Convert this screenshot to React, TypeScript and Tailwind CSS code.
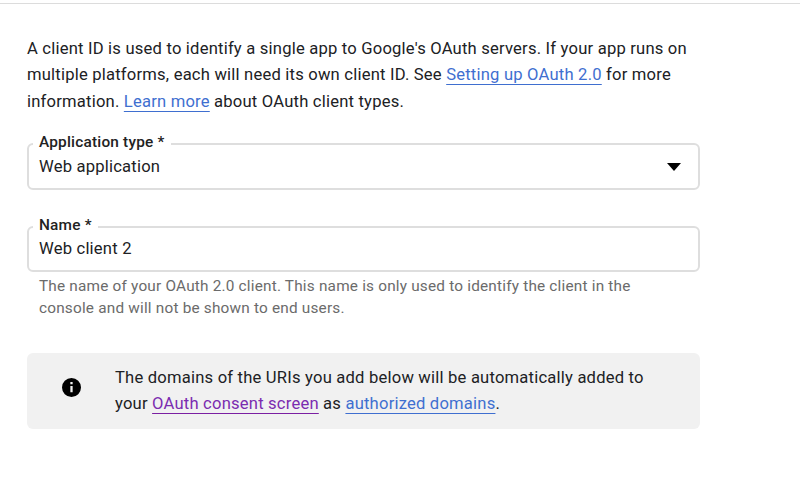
function DocLink({ children, visited }: { children: React.ReactNode; visited?: boolean }) {
  return (
    <a
      href="#"
      className={
        "underline decoration-1 underline-offset-[4px] [text-decoration-skip-ink:none] " +
        (visited ? "text-[#7b2cb0] decoration-[#7b1fa2]" : "text-[#3f6fd0] decoration-[#3f6fd0]")
      }
    >
      {children}
    </a>
  );
}

function OutlinedField({
  label,
  value,
  height,
  children,
}: {
  label: string;
  value: string;
  height: string;
  children?: React.ReactNode;
}) {
  return (
    <div className={`relative flex items-center justify-between rounded-[6px] border-2 border-[#dedede] pl-[10px] pr-[17px] ${height}`}>
      <span className="absolute -top-[13px] left-[4px] bg-white px-[6px] text-[15.4px] leading-[20px] font-medium text-[#222]">
        {label}
      </span>
      <span className="text-[#202124]">{value}</span>
      {children}
    </div>
  );
}

export default function App() {
  return (
    <div className="h-[484px] w-[800px] overflow-hidden bg-white font-['Roboto',sans-serif] text-[16.6px] tracking-[0.2px] text-[#202124]">
      <div className="mt-[3px] h-[1px] bg-[#dcdcdc]" />
      <div className="w-[673px] ml-[27px] pt-[32px]">
        <p className="leading-[26.4px]">
          A client ID is used to identify a single app to Google's OAuth servers. If your app runs on
          multiple platforms, each will need its own client ID. See{" "}
          <DocLink>Setting up OAuth 2.0</DocLink> for more information.{" "}
          <DocLink>Learn more</DocLink> about OAuth client types.
        </p>

        <div className="mt-[28px]">
          <OutlinedField label="Application type *" value="Web application" height="h-[47px] pt-[1px]">
            <svg width="14" height="8" viewBox="0 0 14 8">
              <path d="M0 0h14L7 8z" fill="#000" />
            </svg>
          </OutlinedField>
        </div>

        <div className="mt-[36px]">
          <OutlinedField label="Name *" value="Web client 2" height="h-[46px]" />
        </div>

        <p className="mt-[3px] pl-[12px] pr-[40px] text-[15.35px] leading-[22px] text-[#6b6b6b]">
          The name of your OAuth 2.0 client. This name is only used to identify the client in the
          console and will not be shown to end users.
        </p>

        <div className="mt-[34px] flex h-[76px] items-center rounded-[6px] bg-[#f1f1f1]">
          <div className="flex w-[88px] shrink-0 justify-center">
            <svg width="19" height="19" viewBox="2 2 20 20" className="mt-[-7px]">
              <path
                d="M12 2a10 10 0 1 0 0 20 10 10 0 0 0 0-20zm1.2 15h-2.4v-6.6h2.4V17zm0-8.4h-2.4V6.2h2.4v2.4z"
                fill="#000"
              />
            </svg>
          </div>
          <p className="leading-[26.4px]">
            The domains of the URIs you add below will be automatically added to
            <br />
            your <DocLink visited>OAuth consent screen</DocLink> as{" "}
            <DocLink>authorized domains</DocLink>.
          </p>
        </div>
      </div>
    </div>
  );
}
